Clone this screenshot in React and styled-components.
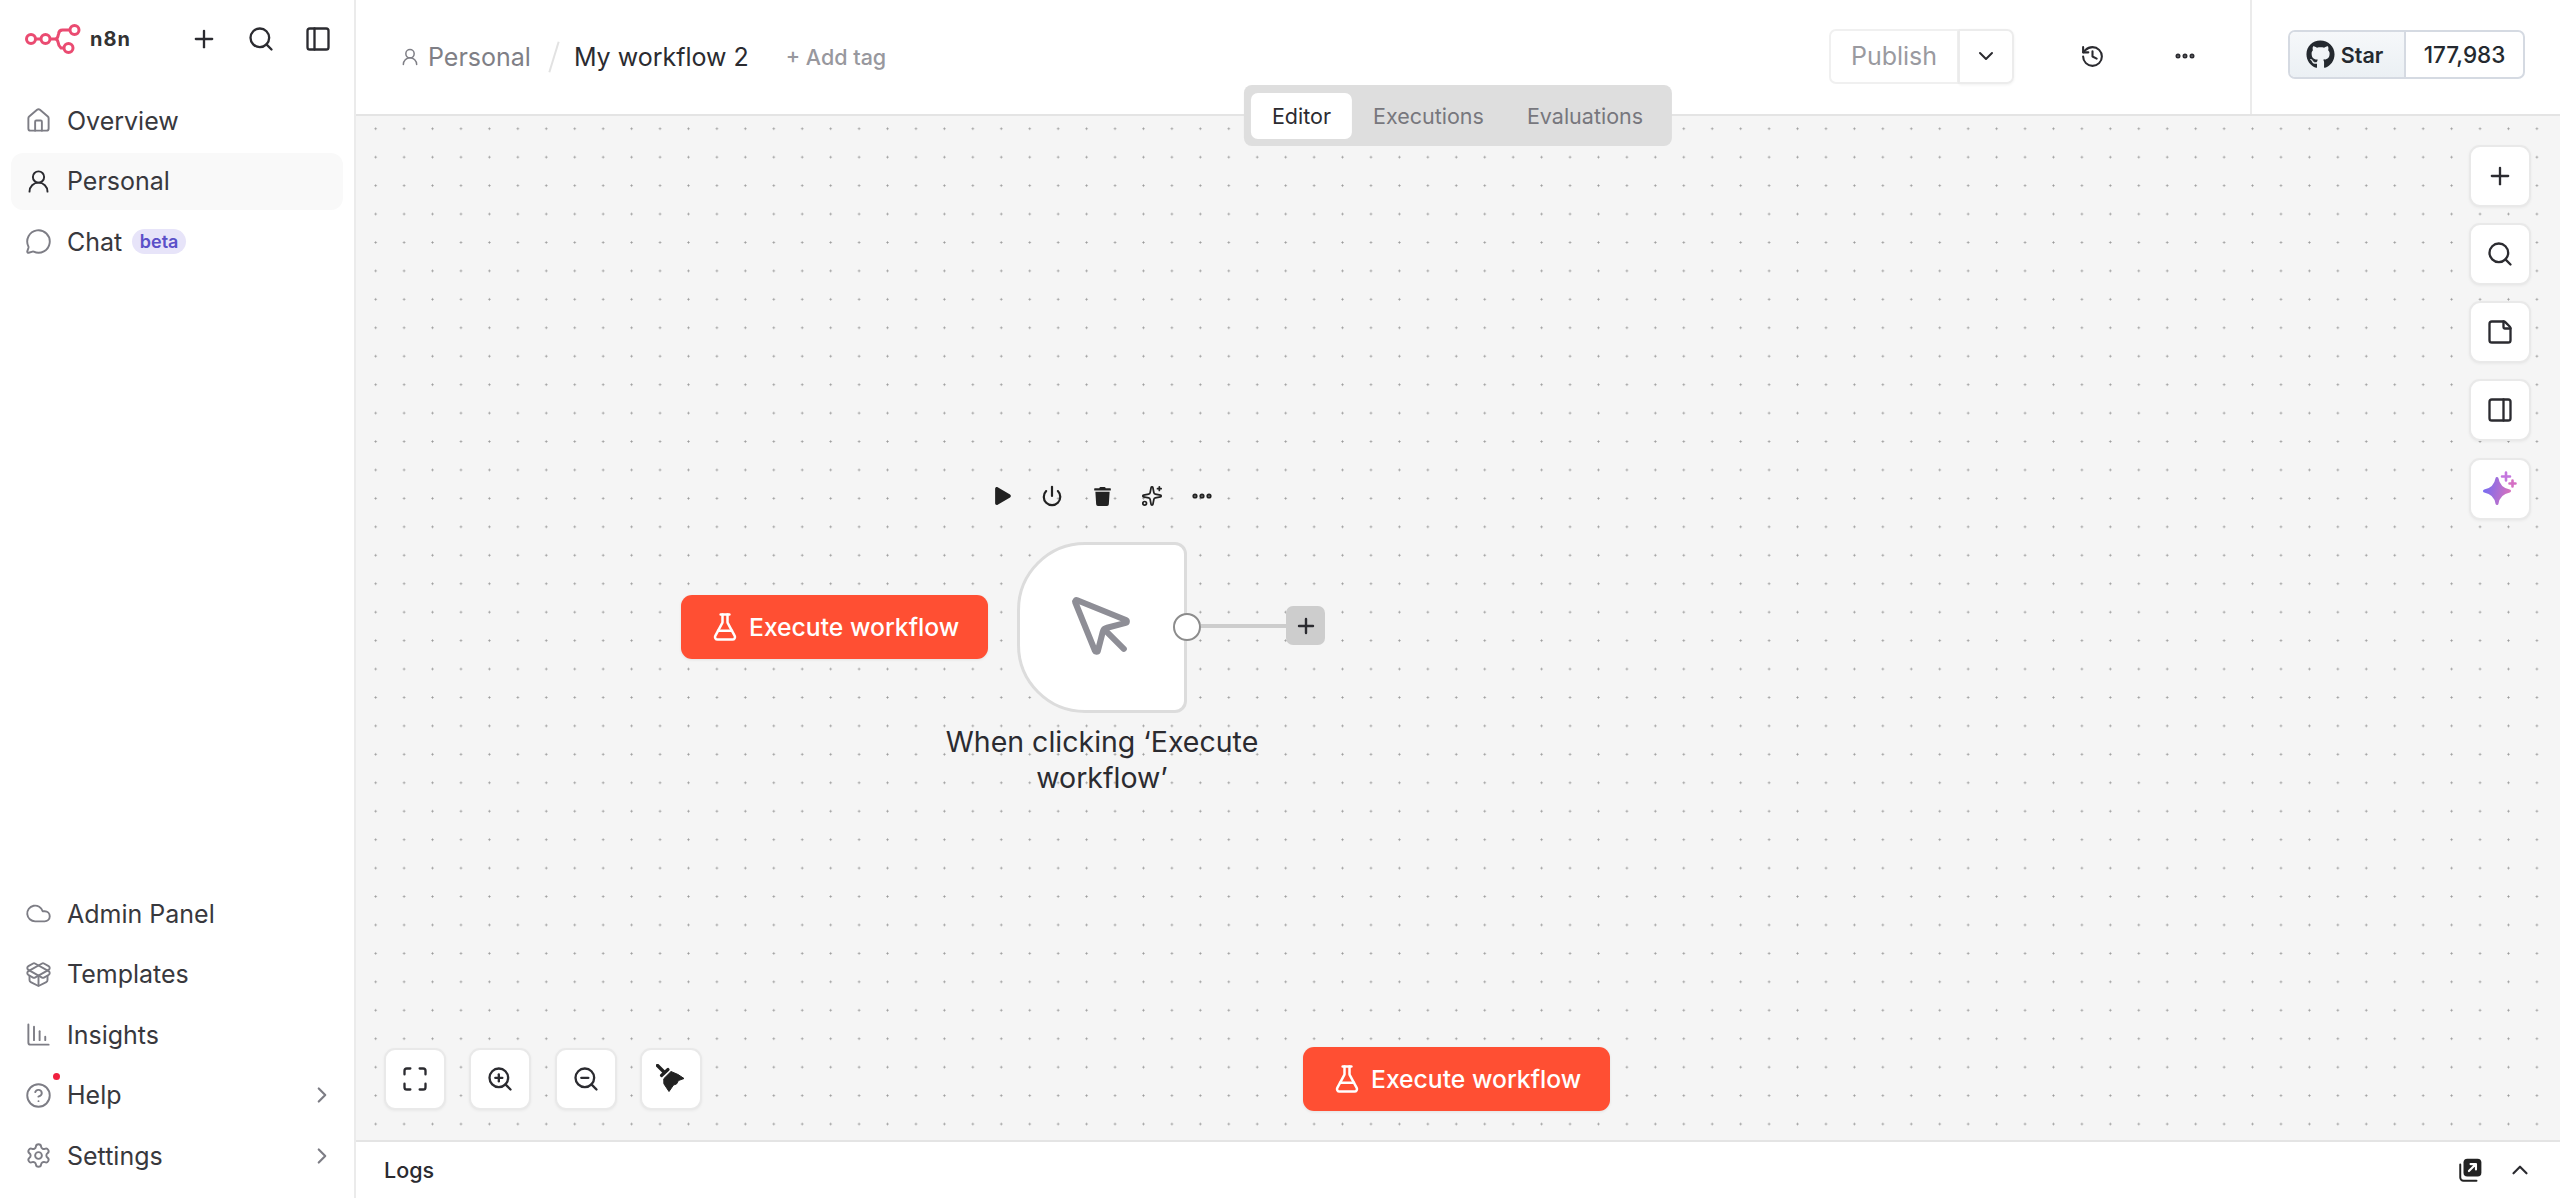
import React from "react";
import styled, { createGlobalStyle } from "styled-components";
import {
  House, UserRound, MessageCircle, Cloud, PackageOpen, ChartColumnDecreasing, CircleHelp,
  Settings, ChevronRight, ChevronDown, ChevronUp, Plus, Search, PanelLeft, PanelRight,
  StickyNote, History, Ellipsis, Maximize, ZoomIn, ZoomOut, FlaskConical, MousePointer,
  Power, Sparkles,
} from "lucide-react";
import { FaPlay, FaTrash, FaGithub } from "react-icons/fa";

const Global = createGlobalStyle`
  html, body { margin: 0; padding: 0; height: 100%; overflow: hidden; }
  body { font-family: Inter, "Noto Sans", sans-serif; color: #2b2b30; background: #fff; }
  #root { height: 100%; }
  * { box-sizing: border-box; }
`;

const Page = styled.div`
  display: flex;
  height: 100vh;
`;

const Sidebar = styled.aside`
  width: 356px;
  flex: none;
  display: flex;
  flex-direction: column;
  border-right: 2px solid #ebebeb;
  padding: 0 11px 14px;
`;

const TopRow = styled.div`
  height: 78px;
  margin: 0 -11px 14px;
  padding: 0 25px;
  display: flex;
  align-items: center;
`;

const LogoText = styled.span`
  font-size: 20px;
  font-weight: 700;
  letter-spacing: 1px;
  margin-left: 9px;
  color: #333;
`;

const TopIcons = styled.div`
  margin-left: auto;
  margin-right: -3px;
  display: flex;
  gap: 29px;
  color: #2b2b30;
  svg { display: block; }
`;

const Nav = styled.nav`
  display: flex;
  flex-direction: column;
  gap: 3.5px;
  margin-top: ${(p) => (p.$bottom ? "auto" : "0")};
`;

const NavItem = styled.div`
  position: relative;
  height: 57px;
  display: flex;
  align-items: center;
  gap: 15px;
  padding: 0 8px 0 14px;
  border-radius: 12px;
  font-size: 25px;
  color: #38383d;
  background: ${(p) => (p.$active ? "#f9f9f9" : "transparent")};
  svg { flex: none; color: ${(p) => (p.$active ? "#2b2b30" : "#7d7d85")}; }
`;

const Beta = styled.span`
  margin-left: -5px;
  height: 25px;
  padding: 0 7.5px;
  display: flex;
  align-items: center;
  border-radius: 13px;
  background: #e7e4f9;
  color: #5b50c8;
  font-size: 18px;
  font-weight: 600;
`;

const RedDot = styled.span`
  position: absolute;
  left: 42px;
  top: 6px;
  width: 7px;
  height: 7px;
  border-radius: 50%;
  background: #f0213f;
`;

const Arrow = styled.span`
  margin-left: auto;
  display: flex;
`;

const Main = styled.main`
  position: relative;
  flex: 1;
  min-width: 0;
  display: flex;
  flex-direction: column;
`;

const Header = styled.header`
  height: 116px;
  flex: none;
  display: flex;
  align-items: stretch;
  border-bottom: 2px solid #e4e4e4;
`;

const Crumbs = styled.div`
  display: flex;
  align-items: center;
  padding-left: 44px;
  font-size: 25px;
  flex: 1;
`;

const CrumbParent = styled.span`
  display: flex;
  align-items: center;
  gap: 8px;
  color: #7f7f86;
`;

const Slash = styled.span`
  width: 2px;
  height: 32px;
  margin: 0 19px 0 22px;
  background: #e2e2e2;
  transform: rotate(17deg);
`;

const AddTag = styled.span`
  margin-left: 37px;
  color: #98989e;
  font-size: 21.5px;
  font-weight: 500;
`;

const Actions = styled.div`
  display: flex;
  align-items: center;
  padding-right: 50px;
`;

const PublishGroup = styled.div`
  display: flex;
  height: 55px;
  margin-right: 63px;
  margin-top: -2px;
`;

const PublishButton = styled.div`
  width: 130px;
  display: flex;
  align-items: center;
  justify-content: center;
  border: 2px solid #f0f0f0;
  border-radius: 7px 0 0 7px;
  color: #9a9aa0;
  font-size: 25px;
`;

const PublishMenu = styled.div`
  width: 55px;
  display: flex;
  align-items: center;
  justify-content: center;
  border: 2px solid #ececec;
  border-left-width: 1px;
  border-radius: 0 7px 7px 0;
  color: #2b2b30;
  box-shadow: 0 1px 3px rgba(0, 0, 0, 0.06);
`;

const HeaderIcon = styled.div`
  width: 30px;
  display: flex;
  justify-content: center;
  margin-top: -2px;
  margin-right: ${(p) => p.$gap || 0}px;
  color: #2b2b30;
`;

const GithubArea = styled.div`
  width: 310px;
  flex: none;
  border-left: 2px solid #ebebeb;
  display: flex;
  align-items: center;
  padding-left: 36px;
`;

const StarWidget = styled.div`
  display: flex;
  height: 49px;
  width: 237px;
  border: 2px solid #d5dae2;
  border-radius: 7px;
  overflow: hidden;
  margin-top: -5px;
  font-size: 21.5px;
  font-weight: 600;
  color: #24292f;
`;

const StarLabel = styled.div`
  width: 116px;
  display: flex;
  align-items: center;
  justify-content: center;
  gap: 6px;
  padding-right: 5px;
  background: linear-gradient(#f6f8fa, #ebf0f4);
  border-right: 2px solid #d5dae2;
`;

const StarCount = styled.div`
  flex: 1;
  display: flex;
  align-items: center;
  justify-content: center;
  font-weight: 500;
  font-size: 22.5px;
`;

const Tabs = styled.div`
  position: absolute;
  top: 85px;
  left: 50%;
  transform: translateX(-50%);
  z-index: 5;
  display: flex;
  align-items: center;
  height: 61px;
  padding: 0 7px;
  background: #dedede;
  border-radius: 8px;
`;

const Tab = styled.div`
  height: 46px;
  display: flex;
  align-items: center;
  padding: 0 21px;
  font-size: 21.5px;
  border-radius: 7px;
  margin-right: ${(p) => (p.$active ? "0" : "1px")};
  color: ${(p) => (p.$active ? "#2b2b30" : "#77777d")};
  background: ${(p) => (p.$active ? "#fff" : "transparent")};
`;

const Canvas = styled.section`
  position: relative;
  flex: 1;
  min-height: 0;
  background-color: #f5f5f5;
  background-image: radial-gradient(circle at center, #999 0, #999 0.8px, transparent 1.3px);
  background-size: 28.44px 28.44px;
  background-position: 5.45px -1.5px;
`;

const ToolButton = styled.div`
  width: 62px;
  height: 62px;
  display: flex;
  align-items: center;
  justify-content: center;
  background: #fff;
  border: 2px solid #e9e9e9;
  border-radius: 11px;
  color: #2b2b30;
  box-shadow: 0 1px 3px rgba(0, 0, 0, 0.05);
`;

const RightTools = styled.div`
  position: absolute;
  right: 29.5px;
  top: 28.5px;
  display: flex;
  flex-direction: column;
  gap: 16.3px;
`;

const BottomTools = styled.div`
  position: absolute;
  left: 28px;
  bottom: 30.5px;
  display: flex;
  gap: 23.3px;
`;

const ExecuteButton = styled.div`
  position: absolute;
  left: ${(p) => p.$x}px;
  top: ${(p) => p.$y}px;
  height: 64px;
  padding: 0 29px;
  display: flex;
  align-items: center;
  gap: 9px;
  background: #ff4f33;
  color: #fff;
  border-radius: 11px;
  font-size: 24.7px;
  font-weight: 500;
  box-shadow: 0 1px 3px rgba(0, 0, 0, 0.08);
`;

const NodeToolbar = styled.div`
  position: absolute;
  left: 634.5px;
  top: 368px;
  width: 223px;
  height: 24px;
  display: flex;
  align-items: center;
  justify-content: space-between;
  color: #222;
`;

const NodeTool = styled.span`
  width: 24px;
  display: flex;
  justify-content: center;
`;

const TriggerNode = styled.div`
  position: absolute;
  left: 661px;
  top: 426px;
  width: 170px;
  height: 171px;
  display: flex;
  align-items: center;
  justify-content: center;
  background: #fff;
  border: 3px solid #dcdcdc;
  border-radius: 68px 12px 12px 68px;
  color: #8e8e96;
`;

const Handle = styled.div`
  position: absolute;
  left: 817px;
  top: 497px;
  width: 28px;
  height: 28px;
  border-radius: 50%;
  background: #fff;
  border: 2px solid #8c8c8c;
`;

const Edge = styled.div`
  position: absolute;
  left: 845px;
  top: 508px;
  width: 85px;
  height: 4px;
  background: #cdcdcd;
`;

const AddNode = styled.div`
  position: absolute;
  left: 930px;
  top: 490px;
  width: 39px;
  height: 39px;
  display: flex;
  align-items: center;
  justify-content: center;
  background: #cdcdcd;
  border-radius: 7px;
  color: #2b2b30;
`;

const NodeLabel = styled.div`
  position: absolute;
  left: 576px;
  top: 608px;
  width: 340px;
  text-align: center;
  font-size: 28.5px;
  line-height: 36px;
  color: #2b2b30;
`;

const LogsBar = styled.footer`
  height: 58px;
  flex: none;
  display: flex;
  align-items: center;
  padding: 0 27px 0 28px;
  background: #fff;
  border-top: 2px solid #e4e4e4;
  font-size: 21.5px;
  font-weight: 500;
  color: #2b2b30;
`;

const LogsActions = styled.div`
  margin-left: auto;
  display: flex;
  align-items: center;
  gap: 24px;
`;

const Logo = () => (
  <svg width="56" height="30" viewBox="0 0 56 30" fill="none" stroke="#ea4b71" strokeWidth="3">
    <circle cx="6" cy="15" r="4.5" />
    <circle cx="20.5" cy="15" r="4.5" />
    <circle cx="49.5" cy="6" r="4.5" />
    <circle cx="43.5" cy="24" r="4.5" />
    <path d="M10.5 15H16M25 15H31M45 6H37.5Q34 6 33.5 10L33 12Q32.5 15 30 15Q32.5 15 33 18Q33.5 22 36 24H39" />
  </svg>
);

const AssistIcon = () => (
  <svg width="40" height="40" viewBox="0 0 40 40" fill="none">
    <defs>
      <linearGradient id="assist" x1="0" y1="0.4" x2="1" y2="0.6">
        <stop offset="0" stopColor="#7a6df0" />
        <stop offset="1" stopColor="#d671bd" />
      </linearGradient>
    </defs>
    <path
      d="M17 9.5C18.2 16.8 22 20.6 29.5 22C22 23.4 18.2 27.2 17 34.5C15.8 27.2 12 23.4 4.5 22C12 20.6 15.8 16.8 17 9.5Z"
      fill="url(#assist)"
      stroke="url(#assist)"
      strokeWidth="3"
      strokeLinejoin="round"
    />
    <path d="M26 3.5V11.5M22 7.5H30" stroke="#c476de" strokeWidth="2.6" strokeLinecap="round" />
    <path d="M32.5 11.5V17.5M29.5 14.5H35.5" stroke="#d56fc4" strokeWidth="2.6" strokeLinecap="round" />
  </svg>
);

const PopOutIcon = () => (
  <svg width="26" height="26" viewBox="0 0 24 24" fill="none">
    <rect x="6" y="1.5" width="16.5" height="16.5" rx="3.5" fill="#222" />
    <path d="M11 13L17.5 6.5M12.5 6.5H17.5V11.5" stroke="#fff" strokeWidth="2" strokeLinecap="round" strokeLinejoin="round" />
    <path d="M3 7V19A3 3 0 0 0 6 22H18" stroke="#222" strokeWidth="1.8" strokeLinecap="round" />
  </svg>
);

const BroomIcon = () => (
  <svg width="29" height="29" viewBox="0 0 29 29" fill="#222" stroke="#222" strokeLinecap="round" strokeLinejoin="round">
    <path d="M1.5 1.5L8 8" strokeWidth="3.4" fill="none" />
    <path d="M5.5 11.5L12 5.5" strokeWidth="3.2" fill="none" />
    <path d="M8 14.5L15 7.5L22 10.5L28 14.5L22.5 16.5L20.5 20L17.5 21L13 27.5L8 20Z" strokeWidth="1" />
  </svg>
);

const mainNav = [
  { label: "Overview", icon: House },
  { label: "Personal", icon: UserRound, active: true },
  { label: "Chat", icon: MessageCircle, beta: true },
];

const bottomNav = [
  { label: "Admin Panel", icon: Cloud },
  { label: "Templates", icon: PackageOpen },
  { label: "Insights", icon: ChartColumnDecreasing },
  { label: "Help", icon: CircleHelp, more: true, dot: true },
  { label: "Settings", icon: Settings, more: true },
];

const NavRow = ({ item }) => {
  const Icon = item.icon;
  return (
    <NavItem $active={item.active}>
      <Icon size={27} strokeWidth={1.7} />
      {item.label}
      {item.beta && <Beta>beta</Beta>}
      {item.dot && <RedDot />}
      {item.more && (
        <Arrow>
          <ChevronRight size={26} strokeWidth={2} />
        </Arrow>
      )}
    </NavItem>
  );
};

const ExecuteLabel = () => (
  <>
    <FlaskConical size={30} strokeWidth={2} />
    Execute workflow
  </>
);

export default function App() {
  return (
    <Page>
      <Global />
      <Sidebar>
        <TopRow>
          <Logo />
          <LogoText>n8n</LogoText>
          <TopIcons>
            <Plus size={28} strokeWidth={2} />
            <Search size={28} strokeWidth={2} />
            <PanelLeft size={28} strokeWidth={2} />
          </TopIcons>
        </TopRow>
        <Nav>
          {mainNav.map((item) => (
            <NavRow key={item.label} item={item} />
          ))}
        </Nav>
        <Nav $bottom>
          {bottomNav.map((item) => (
            <NavRow key={item.label} item={item} />
          ))}
        </Nav>
      </Sidebar>
      <Main>
        <Header>
          <Crumbs>
            <CrumbParent>
              <UserRound size={20} strokeWidth={1.8} />
              Personal
            </CrumbParent>
            <Slash />
            My workflow 2
            <AddTag>+ Add tag</AddTag>
          </Crumbs>
          <Actions>
            <PublishGroup>
              <PublishButton>Publish</PublishButton>
              <PublishMenu>
                <ChevronDown size={24} strokeWidth={2} />
              </PublishMenu>
            </PublishGroup>
            <HeaderIcon $gap={63}>
              <History size={25} strokeWidth={2} />
            </HeaderIcon>
            <HeaderIcon>
              <Ellipsis size={24} strokeWidth={3} />
            </HeaderIcon>
          </Actions>
          <GithubArea>
            <StarWidget>
              <StarLabel>
                <FaGithub size={29} />
                Star
              </StarLabel>
              <StarCount>177,983</StarCount>
            </StarWidget>
          </GithubArea>
        </Header>
        <Tabs>
          <Tab $active>Editor</Tab>
          <Tab>Executions</Tab>
          <Tab>Evaluations</Tab>
        </Tabs>
        <Canvas>
          <NodeToolbar>
            <NodeTool><FaPlay size={18} /></NodeTool>
            <NodeTool><Power size={22} strokeWidth={2.4} /></NodeTool>
            <NodeTool><FaTrash size={19} /></NodeTool>
            <NodeTool><Sparkles size={22} strokeWidth={1.9} /></NodeTool>
            <NodeTool><Ellipsis size={24} strokeWidth={3.2} /></NodeTool>
          </NodeToolbar>
          <ExecuteButton $x={325} $y={479}><ExecuteLabel /></ExecuteButton>
          <TriggerNode>
            <MousePointer size={73} strokeWidth={2} />
          </TriggerNode>
          <Edge />
          <Handle />
          <AddNode>
            <Plus size={24} strokeWidth={2.4} />
          </AddNode>
          <NodeLabel>When clicking ‘Execute workflow’</NodeLabel>
          <ExecuteButton $x={947} $y={931}><ExecuteLabel /></ExecuteButton>
          <RightTools>
            <ToolButton><Plus size={28} strokeWidth={2} /></ToolButton>
            <ToolButton><Search size={28} strokeWidth={2} /></ToolButton>
            <ToolButton><StickyNote size={28} strokeWidth={2} /></ToolButton>
            <ToolButton><PanelRight size={28} strokeWidth={2} /></ToolButton>
            <ToolButton><AssistIcon /></ToolButton>
          </RightTools>
          <BottomTools>
            <ToolButton><Maximize size={28} strokeWidth={2} /></ToolButton>
            <ToolButton><ZoomIn size={28} strokeWidth={2} /></ToolButton>
            <ToolButton><ZoomOut size={28} strokeWidth={2} /></ToolButton>
            <ToolButton><BroomIcon /></ToolButton>
          </BottomTools>
        </Canvas>
        <LogsBar>
          Logs
          <LogsActions>
            <PopOutIcon />
            <ChevronUp size={26} strokeWidth={2} />
          </LogsActions>
        </LogsBar>
      </Main>
    </Page>
  );
}
